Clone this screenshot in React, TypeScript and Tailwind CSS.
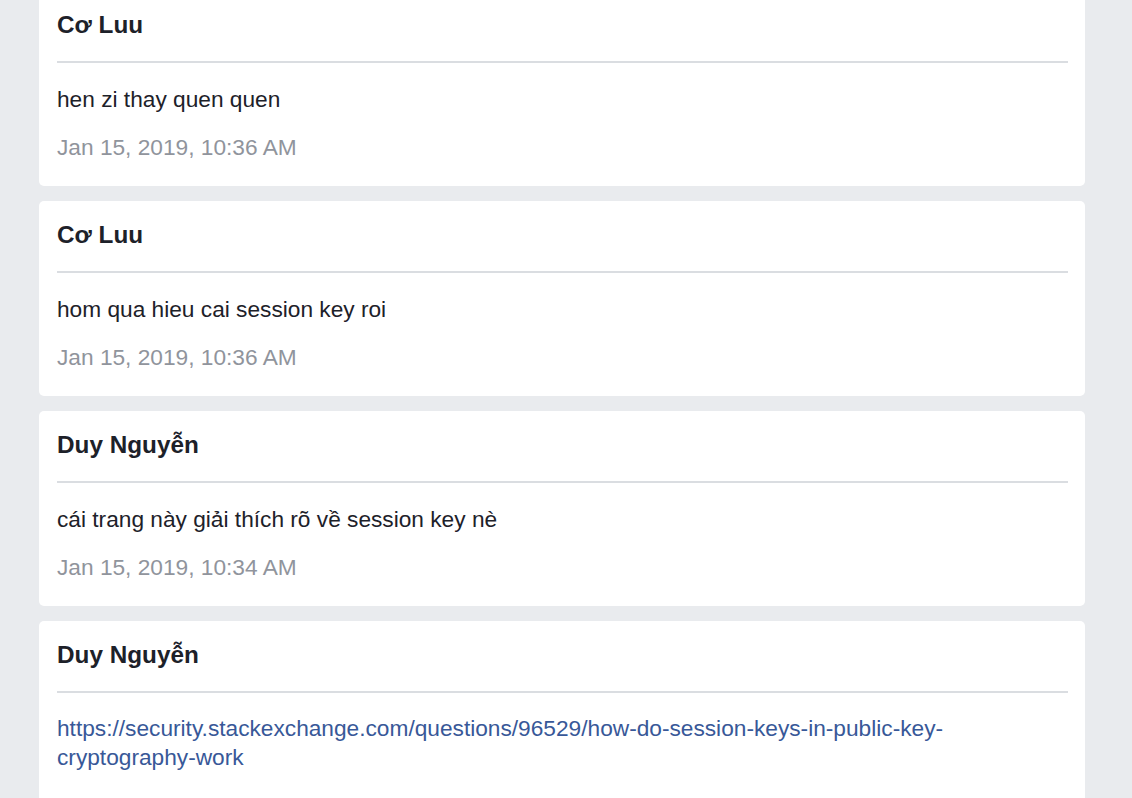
import React from "react";

type Msg = { name: string; text: string; time?: string; link?: boolean };

const msgs: Msg[] = [
  { name: "Cơ Luu", text: "hen zi thay quen quen", time: "Jan 15, 2019, 10:36 AM" },
  { name: "Cơ Luu", text: "hom qua hieu cai session key roi", time: "Jan 15, 2019, 10:36 AM" },
  { name: "Duy Nguyễn", text: "cái trang này giải thích rõ về session key nè", time: "Jan 15, 2019, 10:34 AM" },
  {
    name: "Duy Nguyễn",
    text: "https://security.stackexchange.com/questions/96529/how-do-session-keys-in-public-key-cryptography-work",
    time: "Jan 15, 2019, 10:34 AM",
    link: true,
  },
];

export default function App() {
  return (
    <div
      className="h-[798px] w-[1132px] overflow-hidden bg-[#e9ebee]"
      style={{ fontFamily: '"Liberation Sans", Arial, sans-serif' }}
    >
      <div className="-mt-[9px] flex flex-col gap-[15px] pl-[39px] pr-[47px]">
        {msgs.map((m, i) => (
          <div key={i} className="rounded-[5px] bg-white pl-[18px] pr-[17px] pb-[24px] pt-[19px]">
            <div className="border-b-2 border-[#dadde1] pb-[21px] text-[24.3px] font-bold leading-[30px] text-[#1d2129]">
              {m.name}
            </div>
            {m.link ? (
              <a
                href="#"
                className="mt-[21px] block text-[22.7px] leading-[29px] text-[#385898]"
              >
                {m.text}
              </a>
            ) : (
              <div className="mt-[21px] text-[22.7px] leading-[30px] text-[#1d2129]">{m.text}</div>
            )}
            <div className="mt-[18px] text-[22.7px] leading-[30px] text-[#90949c]">{m.time}</div>
          </div>
        ))}
      </div>
    </div>
  );
}
